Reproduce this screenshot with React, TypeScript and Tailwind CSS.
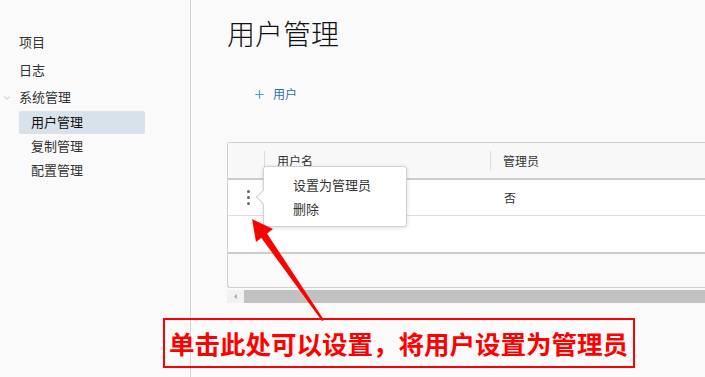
import { Plus, ChevronDown, ChevronLeft } from 'lucide-react'

const font = { fontFamily: '"Noto Sans CJK SC", "Noto Sans", sans-serif' }
const navTop = 'h-[28px] flex items-center pl-[19px] text-[13px] text-[#333]'
const navSub = 'h-[24px] flex items-center pl-[31px] text-[13px] text-[#333]'

function Sidebar() {
  return (
    <aside className="w-[191px] shrink-0 border-r border-[#d6d6d6] pt-[28px] bg-[#fafafa]">
      <div className={navTop}>项目</div>
      <div className={navTop}>日志</div>
      <div className="h-[26px] flex items-center text-[13px] text-[#333] relative pl-[19px]">
        <ChevronDown className="absolute left-[2px] top-[9px] w-[10px] h-[10px] text-[#999]" strokeWidth={1.5} />
        系统管理
      </div>
      <div className="h-[24px] flex items-center">
        <div className="ml-[19px] w-[126px] h-[23px] bg-[#d8e2ea] rounded-[2px] flex items-center pl-[12px] text-[13px] text-[#111]">用户管理</div>
      </div>
      <div className={navSub}>复制管理</div>
      <div className={navSub}>配置管理</div>
    </aside>
  )
}

function UserTable() {
  return (
    <div className="relative">
      <div className="w-[500px] border border-[#cfcfcf] rounded-tl-[3px] rounded-bl-[3px] border-r-0 bg-[#fafafa]">
        <div className="h-[37px] flex items-center bg-[#f8f8f8] border-b-2 border-[#cccccc] text-[12px] text-[#333]">
          <div className="w-[37px] h-[20px] border-r border-[#dcdcdc]" />
          <div className="w-[226px] h-[20px] flex items-center pl-[12px] border-r border-[#dcdcdc]">用户名</div>
          <div className="flex-1 pl-[12px]">管理员</div>
        </div>
        <div className="h-[36px] flex items-center bg-white border-b border-[#dedede] text-[12px] text-[#333]">
          <div className="w-[37px] flex flex-col items-center gap-[3px] pl-[4px]">
            <span className="w-[3px] h-[3px] rounded-full bg-[#666]" />
            <span className="w-[3px] h-[3px] rounded-full bg-[#666]" />
            <span className="w-[3px] h-[3px] rounded-full bg-[#666]" />
          </div>
          <div className="w-[227px]" />
          <div className="flex-1 pl-[12px]">否</div>
        </div>
        <div className="h-[38px] bg-white border-b-2 border-[#cccccc]" />
        <div className="h-[33px]" />
      </div>
      <div className="mt-[2px] h-[13px] flex bg-[#f1f1f1]">
        <div className="w-[17px] flex items-center justify-center">
          <ChevronLeft className="w-[9px] h-[9px] text-[#999]" fill="#999" strokeWidth={1} />
        </div>
        <div className="flex-1 bg-[#c1c1c1]" />
      </div>

      <div className="absolute left-[36px] top-[24px] w-[144px] h-[61px] bg-white border border-[#d2d2d2] rounded-[3px] shadow-[0_1px_4px_rgba(0,0,0,0.15)] pt-[6px] text-[13px] text-[#333]">
        <span className="absolute left-[-6px] top-[25px] w-[10px] h-[10px] bg-white border-l border-b border-[#d2d2d2] rotate-45" />
        <div className="h-[24px] flex items-center pl-[29px]">设置为管理员</div>
        <div className="h-[24px] flex items-center pl-[29px]">删除</div>
      </div>
    </div>
  )
}

function Annotation() {
  return (
    <>
      <svg className="absolute left-0 top-0 pointer-events-none" width="705" height="377">
        <polygon points="322,321 324,320 266,232 260,236" fill="#ff0000" />
        <polygon points="252,219 273,229 256,242" fill="#ff0000" />
      </svg>
      <div className="absolute left-[163px] top-[318px] w-[472px] h-[50px] border-2 border-[#ff0000] flex items-center pl-[4px]">
        <span className="text-[25.5px] leading-none font-bold text-[#ff0000] whitespace-nowrap" style={font}>单击此处可以设置，将用户设置为管理员</span>
      </div>
    </>
  )
}

export default function App() {
  return (
    <div className="relative w-[705px] h-[377px] overflow-hidden bg-[#fafafa] flex" style={font}>
      <Sidebar />
      <main className="flex-1 pl-[36px]">
        <h1 className="mt-[13px] h-[40px] leading-[40px] text-[28px] font-light text-[#111]">用户管理</h1>
        <div className="mt-[33px] ml-[26px] h-[16px] flex items-center gap-[7px] text-[12px] text-[#2a6fae]">
          <Plus className="w-[13px] h-[13px] text-[#4ea3d8]" strokeWidth={2.2} />
          用户
        </div>
        <div className="mt-[40px]">
          <UserTable />
        </div>
      </main>
      <Annotation />
    </div>
  )
}
